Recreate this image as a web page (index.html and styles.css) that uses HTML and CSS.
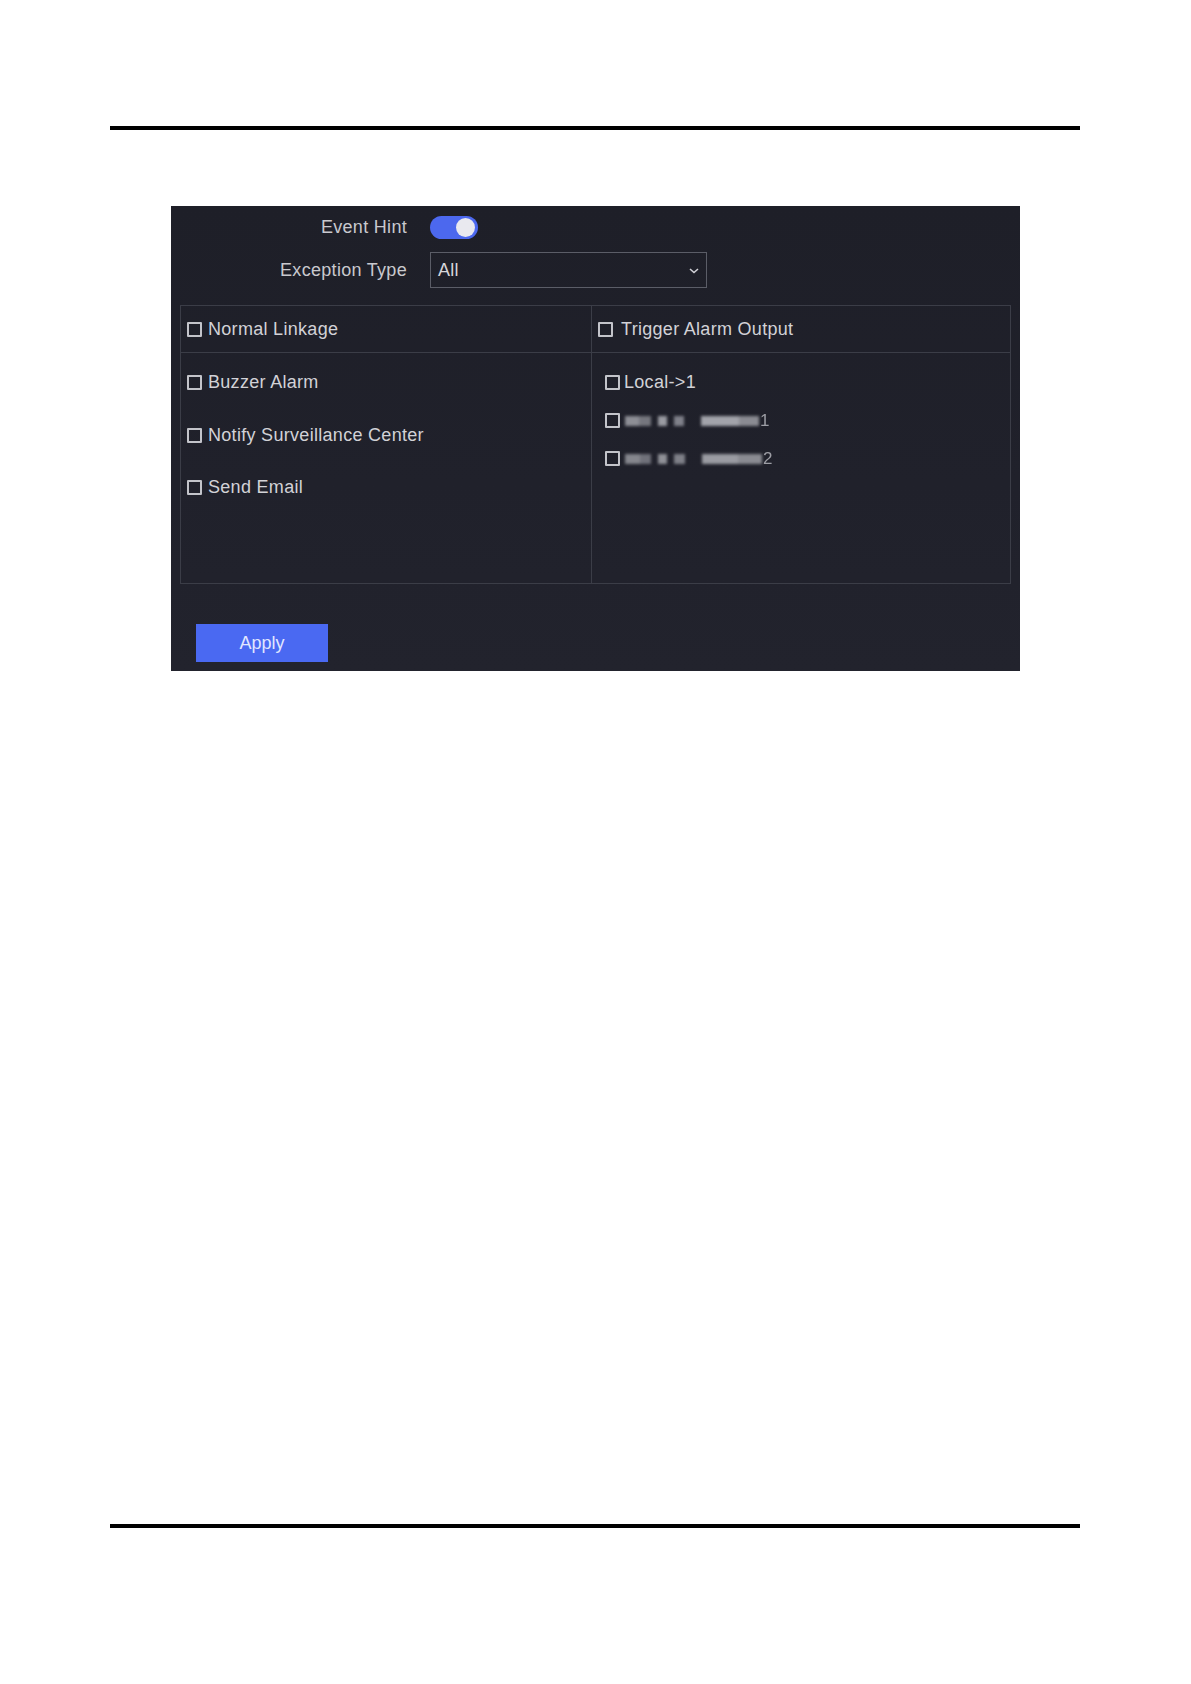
FILE: index.html
```html
<!DOCTYPE html>
<html>
<head>
<meta charset="utf-8">
<link rel="stylesheet" href="styles.css">
</head>
<body>
<div class="page">
  <div class="rule rule-top"></div>
  <div class="panel">
    <div class="form">
      <div class="label">Event Hint</div>
      <div class="control"><span class="toggle"><span class="knob"></span></span></div>
      <div class="label">Exception Type</div>
      <div class="control">
        <div class="select"><span>All</span>
          <svg class="chev" width="10" height="6" viewBox="0 0 10 6"><path d="M1 1 L5 4.5 L9 1" fill="none" stroke="#d0d0d6" stroke-width="1.6"/></svg>
        </div>
      </div>
    </div>
    <div class="table">
      <div class="cell head left"><span class="cb"></span><span class="t">Normal Linkage</span></div>
      <div class="cell head right"><span class="cb"></span><span class="t t2">Trigger Alarm Output</span></div>
      <div class="cell body left">
        <div class="item"><span class="cb"></span><span class="t">Buzzer Alarm</span></div>
        <div class="item"><span class="cb"></span><span class="t">Notify Surveillance Center</span></div>
        <div class="item"><span class="cb"></span><span class="t">Send Email</span></div>
      </div>
      <div class="cell body right">
        <div class="ritem"><span class="cb"></span><span class="t t0">Local-&gt;1</span></div>
        <div class="ritem"><span class="cb"></span>
          <span class="blurred">
            <span class="bk" style="width:14px;background:#8d8e95"></span>
            <span class="bk" style="width:12px;background:#75767e"></span>
            <span class="bk gap" style="width:9px;background:#9a9ba2"></span>
            <span class="bk gap" style="width:10px;background:#80818a"></span>
            <span class="bk gapl" style="width:38px;background:#a2a3aa"></span>
            <span class="bk" style="width:20px;background:#8a8b92"></span>
          </span><span class="num">1</span>
        </div>
        <div class="ritem"><span class="cb"></span>
          <span class="blurred">
            <span class="bk" style="width:15px;background:#85868d"></span>
            <span class="bk" style="width:11px;background:#70717a"></span>
            <span class="bk gap" style="width:9px;background:#8f9097"></span>
            <span class="bk gap" style="width:11px;background:#7f8088"></span>
            <span class="bk gapl" style="width:36px;background:#9a9ba2"></span>
            <span class="bk" style="width:24px;background:#8a8b92"></span>
          </span><span class="num">2</span>
        </div>
      </div>
    </div>
    <div class="actions"><button class="apply">Apply</button></div>
  </div>
  <div class="spacer"></div>
  <div class="rule rule-bottom"></div>
</div>
</body>
</html>
```

FILE: styles.css
```css
html, body {
  margin: 0;
  padding: 0;
  background: #ffffff;
}
.page {
  width: 1191px;
  height: 1684px;
  padding-top: 126px;
  box-sizing: border-box;
  font-family: "Liberation Sans", Arial, sans-serif;
}
.rule {
  height: 4px;
  background: #000;
  margin-left: 110px;
  width: 970px;
}
.panel {
  margin-top: 76px;
  margin-left: 171px;
  width: 849px;
  height: 465px;
  box-sizing: border-box;
  padding: 10px 9px 0 9px;
  background: linear-gradient(180deg, #1e1f28 0%, #20212b 60%, #22232d 100%);
  color: #d2d2d7;
  font-size: 18px;
  letter-spacing: 0.3px;
  display: flex;
  flex-direction: column;
}
.form {
  display: grid;
  grid-template-columns: 227px 277px;
  column-gap: 23px;
  row-gap: 13px;
  align-items: center;
}
.label {
  text-align: right;
  color: #c9c9ce;
}
.control {
  display: flex;
  align-items: center;
}
.toggle {
  width: 48px;
  height: 23px;
  border-radius: 12px;
  background: #4c68ee;
  position: relative;
  display: inline-block;
}
.knob {
  position: absolute;
  right: 3px;
  top: 2px;
  width: 19px;
  height: 19px;
  border-radius: 50%;
  background: #e9e9ef;
}
.select {
  width: 277px;
  height: 36px;
  box-sizing: border-box;
  border: 1px solid #5b5d67;
  display: flex;
  align-items: center;
  justify-content: space-between;
  padding: 0 7px 0 7px;
  color: #d6d6da;
}
.chev {
  display: block;
  margin-top: 1px;
}
.table {
  margin-top: 17px;
  width: 831px;
  height: 279px;
  box-sizing: border-box;
  border: 1px solid #3b3d47;
  display: grid;
  grid-template-columns: 411px 1fr;
  grid-template-rows: 47px 1fr;
}
.cell {
  display: flex;
  box-sizing: border-box;
}
.cell.left {
  border-right: 1px solid #3b3d47;
}
.cell.head {
  border-bottom: 1px solid #3b3d47;
  align-items: center;
  padding-left: 6px;
}
.cb {
  width: 15px;
  height: 15px;
  box-sizing: border-box;
  border: 2px solid #c3c4ca;
  border-radius: 1px;
  flex: none;
}
.t {
  margin-left: 6px;
  white-space: nowrap;
}
.t2 { margin-left: 8px; }
.t0 { margin-left: 4px; }
.cell.body.left {
  flex-direction: column;
  padding: 19px 0 0 6px;
  gap: 31.5px;
}
.item {
  display: flex;
  align-items: center;
  height: 21px;
}
.cell.body.right {
  flex-direction: column;
  padding: 19px 0 0 13px;
  gap: 17px;
}
.ritem {
  display: flex;
  align-items: center;
  height: 21px;
}
.blurred {
  display: flex;
  align-items: center;
  margin-left: 5px;
  filter: blur(1.6px);
}
.bk {
  display: inline-block;
  height: 10px;
}
.bk.gap { margin-left: 7px; }
.bk.gapl { margin-left: 17px; }
.num {
  margin-left: 1px;
  color: #9d9ea5;
  filter: blur(0.6px);
  font-size: 17px;
}
.actions {
  margin-top: 40px;
  padding-left: 16px;
}
.apply {
  width: 132px;
  height: 38px;
  border: none;
  border-radius: 0;
  background: #4a69f2;
  color: #e1e7ff;
  font-family: "Liberation Sans", Arial, sans-serif;
  font-size: 18px;
  padding: 0;
}
.spacer {
  height: 853px;
}
```
